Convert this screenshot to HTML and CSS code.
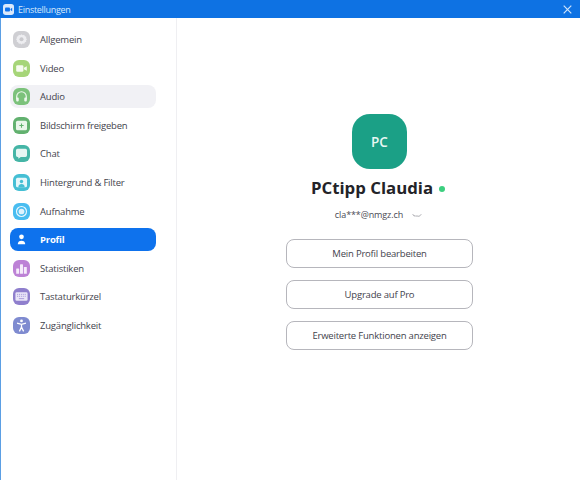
FILE: index.html
```html
<!DOCTYPE html>
<html lang="de">
<head>
<meta charset="utf-8">
<title>Einstellungen</title>
<link rel="stylesheet" href="styles.css">
</head>
<body>
<div class="window">
  <header class="titlebar">
    <span class="app-icon"><svg viewBox="0 0 12 12" width="11" height="11"><rect width="12" height="12" rx="3" fill="#dbe9fb"/><rect x="2.2" y="3.8" width="5.4" height="4.4" rx="1" fill="#0e72ed"/><path d="M8.2 5.4 10 4.2v3.6L8.2 6.6z" fill="#0e72ed"/></svg></span>
    <span class="title">Einstellungen</span>
    <svg class="close" viewBox="0 0 9 9" width="9" height="9"><path d="M.7.7l7.6 7.6M8.3.7L.7 8.300" stroke="#cfe4fb" stroke-width="1.200" fill="none"/></svg>
  </header>
  <div class="body">
    <nav class="sidebar">
      <a class="item"><span class="icon c-gray"><svg viewBox="0 0 16 16"><path d="M8 3l1.100.9 1.400-.3.700 1.300 1.300.6-.2 1.400.9.900-.9 1 .2 1.400-1.300.5-.7 1.300-1.400-.3-1.100.9-1.100-.9-1.400.3-.7-1.300-1.300-.5.2-1.400-.9-1 .9-.9-.2-1.400 1.300-.6.7-1.300 1.400.3z" fill="#ededf0"/><circle cx="8" cy="7.800" r="1.900" fill="#c9c9cd"/></svg></span>Allgemein</a>
      <a class="item"><span class="icon c-lime"><svg viewBox="0 0 16 16"><rect x="3" y="5" width="6.800" height="6" rx="1.200" fill="#f6fbef"/><path d="M10.300 7.300l2.700-1.500v4.400l-2.700-1.500z" fill="#f6fbef"/></svg></span>Video</a>
      <a class="item hover"><span class="icon c-green"><svg viewBox="0 0 16 16"><path d="M3.500 10.500V8a4.500 4.500 0 0 1 9 0v2.500" fill="none" stroke="#eef8ee" stroke-width="1.100"/><rect x="3" y="9" width="2.400" height="3.800" rx="1" fill="#eef8ee"/><rect x="10.600" y="9" width="2.400" height="3.800" rx="1" fill="#eef8ee"/></svg></span>Audio</a>
      <a class="item"><span class="icon c-share"><svg viewBox="0 0 16 16"><rect x="2.800" y="3.500" width="10.400" height="9" rx="1.500" fill="#eaf6eb"/><path d="M8 6v4M6 8h4" stroke="#62b16f" stroke-width="1"/></svg></span>Bildschirm freigeben</a>
      <a class="item"><span class="icon c-teal"><svg viewBox="0 0 16 16"><path d="M4.300 3.500h7.400A1.500 1.500 0 0 1 13.200 5v4.700a1.500 1.500 0 0 1-1.500 1.500H7.300l-2.300 1.700v-1.700h-.7a1.500 1.500 0 0 1-1.500-1.500V5a1.500 1.500 0 0 1 1.500-1.500z" fill="#e6f6f3"/></svg></span>Chat</a>
      <a class="item"><span class="icon c-cyan"><svg viewBox="0 0 16 16"><rect x="2.800" y="3.500" width="10.400" height="9" rx="1.500" fill="#e6f7fa"/><circle cx="8" cy="7" r="1.600" fill="#45bfd4"/><path d="M5 12.500c0-2 1.300-3 3-3s3 1 3 3z" fill="#45bfd4"/></svg></span>Hintergrund &amp; Filter</a>
      <a class="item"><span class="icon c-sky"><svg viewBox="0 0 16 16"><circle cx="8" cy="8" r="4.700" fill="none" stroke="#eaf8fe" stroke-width="1.100"/><circle cx="8" cy="8" r="2.700" fill="#dff3fd"/></svg></span>Aufnahme</a>
      <a class="item active"><span class="icon c-none"><svg viewBox="0 0 16 16"><circle cx="8" cy="5.500" r="2.200" fill="#fff"/><path d="M4.500 12.500c0-2.400 1.500-3.400 3.500-3.400s3.500 1 3.500 3.400z" fill="#fff"/></svg></span>Profil</a>
      <a class="item"><span class="icon c-purple"><svg viewBox="0 0 16 16"><rect x="3" y="8" width="2.800" height="5" rx=".5" fill="#f6ecfb"/><rect x="6.600" y="4" width="2.800" height="9" rx=".5" fill="#f6ecfb"/><rect x="10.200" y="6.500" width="2.800" height="6.500" rx=".5" fill="#f6ecfb"/></svg></span>Statistiken</a>
      <a class="item"><span class="icon c-violet"><svg viewBox="0 0 16 16"><rect x="2.300" y="4" width="11.400" height="8" rx="1.200" fill="#e9e5f7"/><path d="M3.800 6h8.400M3.800 7.800h8.400" stroke="#a79ad9" stroke-width=".9" stroke-dasharray="1 .8"/><path d="M5.500 10h5" stroke="#a79ad9" stroke-width=".9"/></svg></span>Tastaturkürzel</a>
      <a class="item"><span class="icon c-indigo"><svg viewBox="0 0 16 16"><circle cx="8" cy="3.700" r="1.300" fill="#fff"/><path d="M3.800 5.800L8 6.900l4.200-1.100M8 6.900v2.600M8 9.500L6 13.500M8 9.500l2 4" stroke="#fff" stroke-width="1.200" fill="none"/></svg></span>Zugänglichkeit</a>
    </nav>
    <main class="profile">
      <div class="avatar">PC</div>
      <div class="name-row"><h1 class="name">PCtipp Claudia</h1><span class="status"></span></div>
      <div class="email-row"><span class="email">cla***@nmgz.ch</span><svg class="eye" viewBox="0 0 10 5" width="10" height="5"><path d="M.8 1.200c.8 1.600 1.300 2.200 2.200 1.400.6.900 1.200.7 2 .1.900.7 1.300.9 2 .1.600.5 1.200-.2 2.200-1.400" stroke="#8f8f97" stroke-width=".8" fill="none"/></svg></div>
      <div class="actions">
        <button class="btn">Mein Profil bearbeiten</button>
        <button class="btn">Upgrade auf Pro</button>
        <button class="btn">Erweiterte Funktionen anzeigen</button>
      </div>
    </main>
  </div>
</div>
</body>
</html>
```
FILE: styles.css
```css
* { box-sizing: border-box; }
html, body { margin: 0; height: 100%; }
body { font-family: "Open Sans", "Noto Sans", sans-serif; background: #fff; color: #3f3f49; overflow: hidden; }
.window { width: 580px; height: 480px; display: flex; flex-direction: column; border-left: 1px solid #5b9fe4; }
.titlebar { height: 18px; flex: none; margin-left: -1px; background: #0e72e3; display: flex; align-items: center; padding: 0 8px 0 3px; color: #d8e9fc; font-size: 9px; letter-spacing: -.3px; }
.app-icon { width: 11px; height: 11px; display: block; margin-right: 4px; }
.app-icon svg { display: block; }
.title { flex: 1; line-height: 17px; }
.close { display: block; }
.body { flex: 1; display: flex; min-height: 0; }
.sidebar { width: 176px; flex: none; border-right: 1px solid #efeff2; padding: 10px 0 0 9px; display: flex; flex-direction: column; gap: 5.600px; }
.item { width: 146px; height: 23px; border-radius: 8px; display: flex; align-items: center; padding-left: 3px; font-size: 9.500px; letter-spacing: -.2px; color: #43434d; }
.item.hover { background: #f1f1f5; }
.item.active { background: #0e72ed; color: #fff; font-weight: 700; }
.icon { width: 17px; height: 17px; border-radius: 6px; margin-right: 10px; display: block; flex: none; }
.icon svg { display: block; width: 17px; height: 17px; }
.c-gray { background: #cfcfd3; }
.c-lime { background: #a6d578; }
.c-green { background: #7cc27b; }
.c-share { background: #62b16f; }
.c-teal { background: #45b5a6; }
.c-cyan { background: #45bfd4; }
.c-sky { background: #49bdf0; }
.c-none { background: transparent; }
.c-purple { background: #bd82d6; }
.c-violet { background: #8f7fcd; }
.c-indigo { background: #7f8bd0; }
.profile { flex: 1; display: flex; flex-direction: column; align-items: center; padding: 96px 0 0 2px; }
.avatar { width: 55px; height: 55px; border-radius: 18px; background: #1ba086; color: #e8f7f3; font-weight: 600; font-size: 13.500px; display: flex; align-items: center; justify-content: center; }
.name-row { display: flex; align-items: center; margin-top: 7px; height: 24px; padding-right: 3px; }
.name { margin: 0; font-size: 16.800px; font-weight: 700; color: #232328; line-height: 24px; }
.status { width: 6px; height: 6px; border-radius: 50%; background: #3ccf7f; margin-left: 6px; margin-top: 2px; }
.email-row { display: flex; align-items: center; margin-top: 6px; height: 16px; font-size: 9px; letter-spacing: -.1px; color: #4a4a54; padding-right: 2px; }
.eye { margin-left: 9px; margin-top: 2px; }
.actions { display: flex; flex-direction: column; gap: 12px; margin-top: 17px; }
.btn { width: 187px; height: 29px; border: 1px solid #b6b6bc; border-radius: 8px; background: #fff; color: #43434d; font-family: inherit; font-size: 9.500px; letter-spacing: -.2px; padding: 0; }
```
